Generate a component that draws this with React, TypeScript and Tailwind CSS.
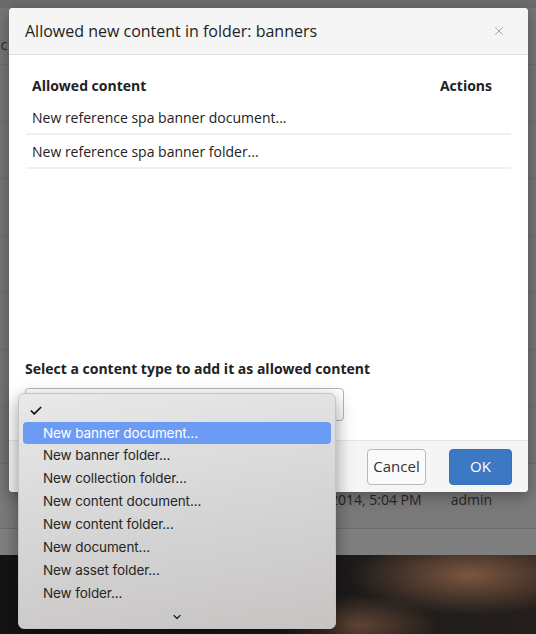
import { Check, ChevronDown, X } from "lucide-react";

const allowed = ["New reference spa banner document...", "New reference spa banner folder..."];

const options = [
  "New banner folder...",
  "New collection folder...",
  "New content document...",
  "New content folder...",
  "New document...",
  "New asset folder...",
  "New folder...",
];

function Background() {
  return (
    <div className="flex flex-col h-full font-['Open_Sans',sans-serif] text-[14px] text-[#262626]">
      <div className="h-[8px] bg-[#6c6c6c]" />
      {/* dimmed list rows behind the dialog */}
      <div className="flex flex-col bg-[#767676]">
        {[0, 1, 2, 3, 4, 5, 6, 7].map((i) => (
          <div key={i} className="h-[57px] border-b border-[#6e6e6e] flex items-start pt-[26px]">
            {i === 0 && <span className="-ml-[3px] text-[14px]">ic</span>}
          </div>
        ))}
      </div>
      <div className="h-[65px] bg-[#7a7a7a] border-b border-[#6c6c6c] flex items-end pb-[18px] pl-[330px] gap-[29px]">
        <span>2014, 5:04 PM</span>
        <span>admin</span>
      </div>
      <div className="h-[26px] bg-[#7f7f7f]" />
      <div className="flex-1 bg-[radial-gradient(ellipse_120px_40px_at_470px_20px,#7a5640_0%,transparent_100%),radial-gradient(ellipse_80px_30px_at_360px_70px,#5e4333_0%,transparent_100%),linear-gradient(90deg,#141414_0%,#1c1a19_60%,#241f1c_100%)]" />
    </div>
  );
}

function Dialog() {
  return (
    <div className="absolute left-[9px] top-[8px] w-[519px] h-[484px] bg-white rounded-[4px] shadow-[0_4px_16px_rgba(0,0,0,0.35)] flex flex-col overflow-hidden font-['Open_Sans',sans-serif] text-[#222]">
      <div className="h-[47px] shrink-0 bg-[#f5f5f5] border-b border-[#dedede] flex items-center justify-between pl-[16px] pr-[22px]">
        <span className="text-[16px] leading-none">Allowed new content in folder: banners</span>
        <X className="w-[14px] h-[14px] text-[#9a9a9a]" strokeWidth={1.5} />
      </div>

      <div className="flex-1 flex flex-col justify-between px-[16px] pt-[15px] pb-[19px]">
        <div className="flex flex-col px-[1px]">
          <div className="h-[31px] flex items-center justify-between px-[6px] font-bold text-[14px]">
            <span>Allowed content</span>
            <span className="pr-[13px]">Actions</span>
          </div>
          {allowed.map((a) => (
            <div key={a} className="h-[34px] flex items-center px-[6px] border-b-2 border-[#f0f0f0] text-[14px]">
              {a}
            </div>
          ))}
        </div>

        <div className="flex flex-col gap-[9px]">
          <span className="font-bold text-[14px]">Select a content type to add it as allowed content</span>
          <div className="w-[319px] h-[33px] border border-[#b5b5b5] rounded-[4px] bg-white flex items-center justify-end pr-[6px]">
            <ChevronDown className="w-[10px] h-[10px] text-[#444]" />
          </div>
        </div>
      </div>

      <div className="h-[52px] shrink-0 bg-[#f5f5f5] border-t border-[#e5e5e5] flex items-center justify-end gap-[23px] pr-[16px]">
        <button className="h-[36px] w-[59px] rounded-[4px] border border-[#b8b8b8] bg-[#fafafa] text-[15px] text-[#333]">
          Cancel
        </button>
        <button className="h-[36px] w-[63px] rounded-[4px] bg-[#3d78c4] border border-[#3570bb] text-[15px] text-white">
          OK
        </button>
      </div>
    </div>
  );
}

function Popup() {
  return (
    <div className="absolute left-[18px] top-[393px] w-[318px] h-[236px] rounded-[6px] bg-[linear-gradient(170deg,#e9e9e9_0%,#d6d6d6_50%,#c7c4c3_100%)] shadow-[0_6px_18px_rgba(0,0,0,0.4)] border border-[#c4c4c4] px-[4px] pt-[6px] font-['Inter',sans-serif] text-[13.5px] tracking-[-0.1px] text-[#262626] flex flex-col">
      <div className="h-[22px] flex items-center pl-[6px]">
        <Check className="w-[14px] h-[14px] text-[#111]" strokeWidth={3} />
      </div>
      <div className="h-[22px] flex items-center pl-[20px] rounded-[4px] bg-[#6c9bf5] text-white">
        New banner document...
      </div>
      {options.map((o) => (
        <div key={o} className="h-[23px] flex items-center pl-[20px]">
          {o}
        </div>
      ))}
      <div className="flex-1 flex items-center justify-center">
        <ChevronDown className="w-[12px] h-[12px] text-[#222]" strokeWidth={2.5} />
      </div>
    </div>
  );
}

export default function App() {
  return (
    <div className="relative w-[536px] h-[634px] overflow-hidden bg-[#777]">
      <Background />
      <Dialog />
      <Popup />
    </div>
  );
}
